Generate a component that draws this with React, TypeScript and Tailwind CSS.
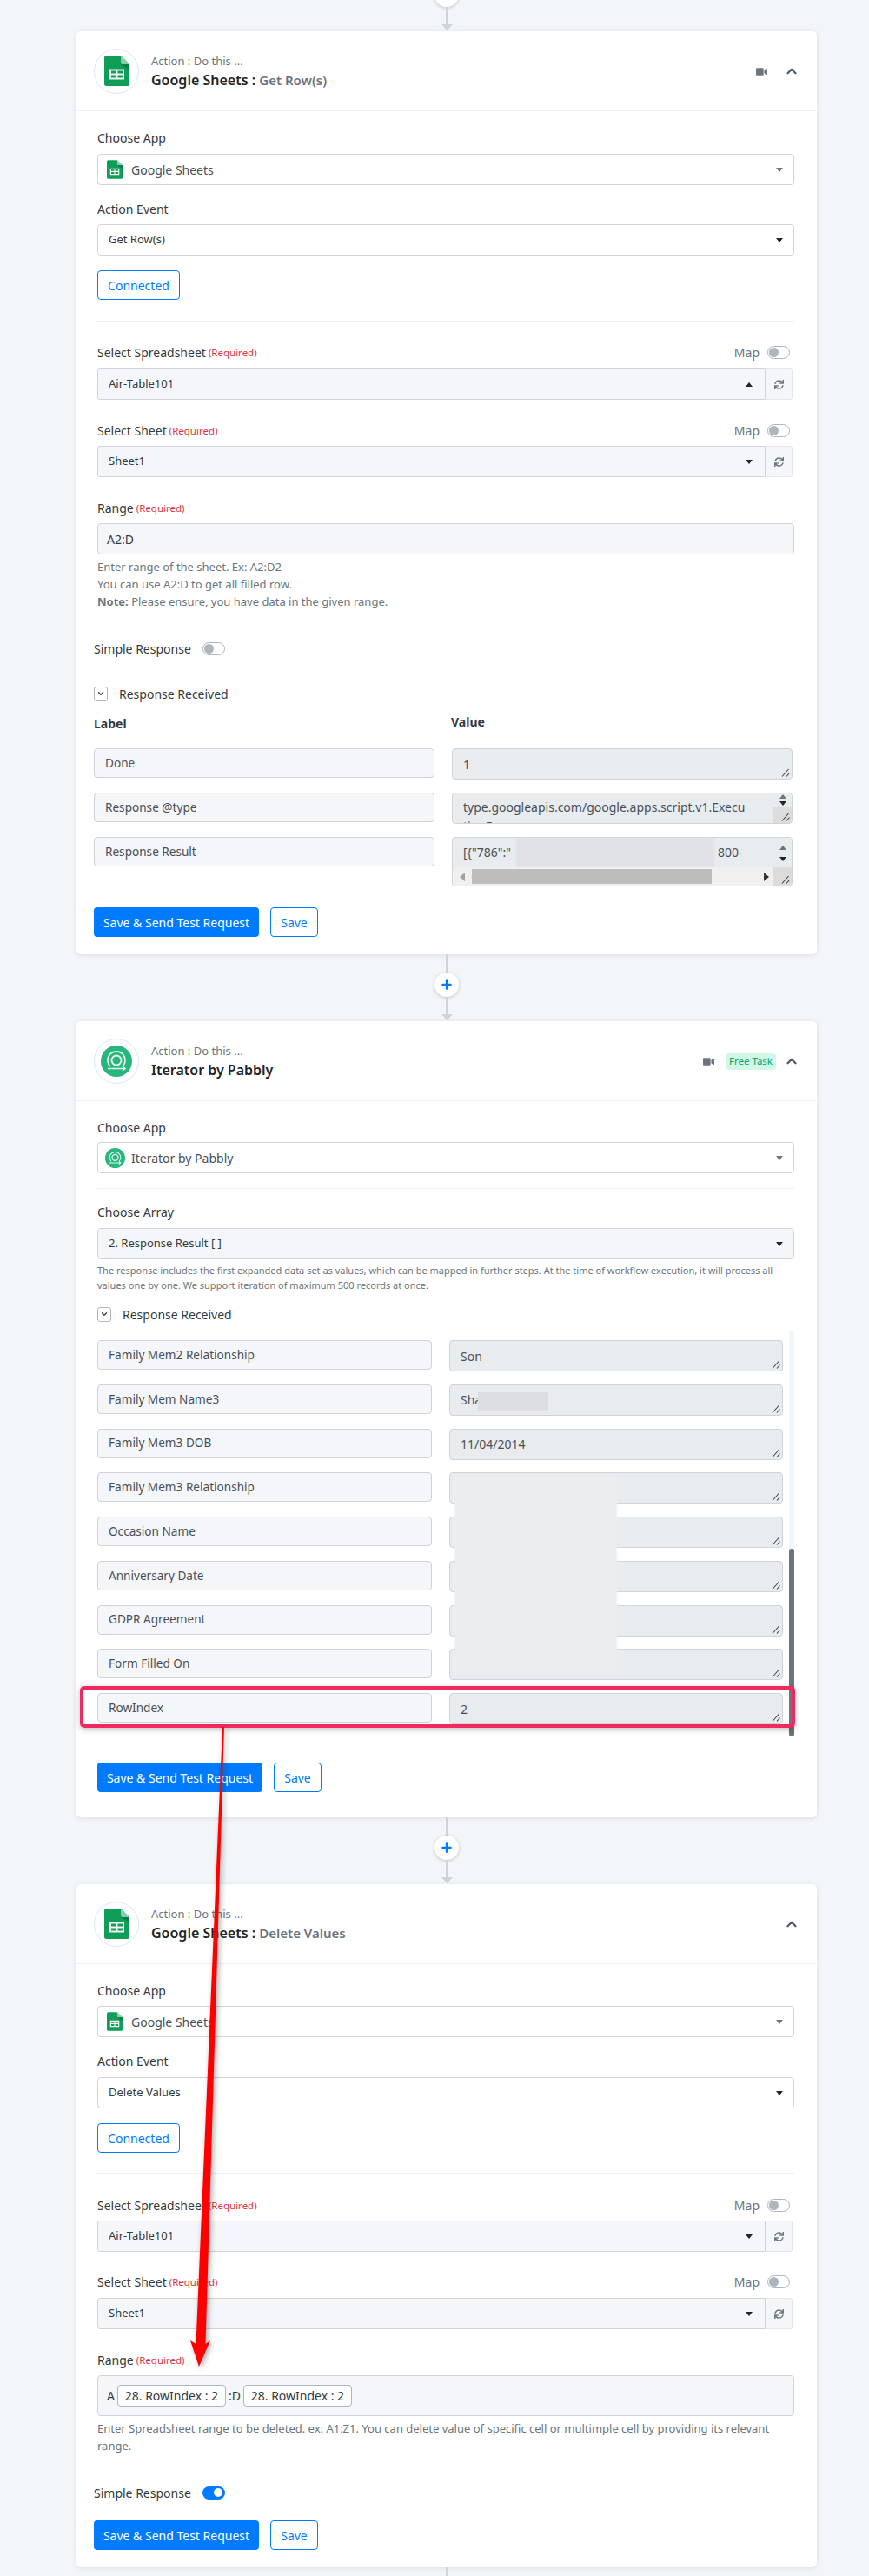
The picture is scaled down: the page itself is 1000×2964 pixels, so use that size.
import React from 'react';
import { ChevronDown, ChevronUp, Plus } from 'lucide-react';
import { FaSync, FaVideo } from 'react-icons/fa';

// small drawn pieces
const SheetsIcon = ({ className }: { className: string }) => (
  <svg viewBox="0 0 29 35" className={className}>
    <path d="M2.5 0H19L29 10V32.5A2.5 2.5 0 0 1 26.5 35H2.5A2.5 2.5 0 0 1 0 32.5V2.5A2.5 2.5 0 0 1 2.5 0Z" fill="#0f9d58" />
    <path d="M19 0L29 10H21A2 2 0 0 1 19 8Z" fill="#87ceac" />
    <path d="M19 10L29 16V10Z" fill="#0b7d46" />
    <path d="M6 15.5H23V27.5H6ZM8 17.5V20.5H13.5V17.5ZM15.5 17.5V20.5H21V17.5ZM8 22.5V25.5H13.5V22.5ZM15.5 22.5V25.5H21V22.5Z" fill="#f1f1f1" fillRule="evenodd" />
  </svg>
);

const IteratorIcon = ({ className }: { className: string }) => (
  <svg viewBox="0 0 36 36" className={className}>
    <circle cx="18" cy="18" r="18" fill="#27b67c" />
    <circle cx="18" cy="17" r="5.5" fill="none" stroke="#e8f7f0" strokeWidth="2" />
    <path d="M11 24A10 10 0 1 1 25 24" fill="none" stroke="#e8f7f0" strokeWidth="1.6" />
    <path d="M8 26.5H28M25 24L28 26.5L25 29" fill="none" stroke="#e8f7f0" strokeWidth="1.6" />
  </svg>
);

const Caret = ({ up, gray }: { up?: boolean; gray?: boolean }) => (
  <svg viewBox="0 0 8 5" className="h-[5px] w-2 shrink-0">
    <path d={up ? 'M0 5L4 0L8 5Z' : 'M0 0H8L4 5Z'} fill={gray ? '#6c757d' : '#1f2529'} />
  </svg>
);

const Grip = () => (
  <svg viewBox="0 0 10 10" className="absolute bottom-[2px] right-[2px] h-[10px] w-[10px]">
    <path d="M1 9.5L8.5 1M6 9.5L9.5 5.5" stroke="#444" strokeWidth="1.1" fill="none" />
  </svg>
);

const Label = ({ text, required, className = '' }: { text: string; required?: boolean; className?: string }) => (
  <div className={`flex h-5 items-center text-[14px] text-[#343a40] ${className}`}>
    {text}
    {required && <span className="ml-[3px] mt-[2px] text-[11.5px] text-[#dc3545]">(Required)</span>}
  </div>
);

const Toggle = ({ on }: { on?: boolean }) =>
  on ? (
    <span className="flex h-[15px] w-[26px] items-center justify-end rounded-full bg-[#007bff] pr-[3px]">
      <span className="h-[10px] w-[10px] rounded-full bg-white" />
    </span>
  ) : (
    <span className="flex h-[15px] w-[26px] items-center rounded-full border border-[#adb5bd] bg-white pl-[1px]">
      <span className="h-[11px] w-[11px] rounded-full bg-[#adb5bd]" />
    </span>
  );

const MapLabel = ({ text, className }: { text: string; className: string }) => (
  <div className={`flex h-5 items-center justify-between pr-[5px] ${className}`}>
    <Label text={text} required />
    <div className="flex items-center gap-[9px] text-[14px] text-[#6c757d]">
      Map
      <Toggle />
    </div>
  </div>
);

const AppSelect = ({ name, icon, className }: { name: string; icon: React.ReactNode; className: string }) => (
  <div className={`flex h-9 items-center rounded-[4px] border border-[#ced4da] bg-white pr-[12px] text-[14px] text-[#495057] ${className}`}>
    <span className="flex w-[38px] justify-center">{icon}</span>
    <span className="flex-1">{name}</span>
    <Caret gray />
  </div>
);

const PlainSelect = ({ value, gray, className }: { value: string; gray?: boolean; className: string }) => (
  <div className={`flex h-9 items-center rounded-[4px] border border-[#ced4da] pl-3 pr-[12px] text-[13px] text-[#343a40] ${gray ? 'bg-[#f4f6f9]' : 'bg-white'} ${className}`}>
    <span className="flex-1">{value}</span>
    <Caret />
  </div>
);

const SheetSelect = ({ value, up, className }: { value: string; up?: boolean; className: string }) => (
  <div className={`flex h-9 w-[800px] ${className}`}>
    <div className="flex w-[769px] items-center rounded-l-[3px] border border-[#ced4da] bg-[#f4f6f9] pl-3 pr-[14px] text-[13px] text-[#343a40]">
      <span className="flex-1">{value}</span>
      <Caret up={up} />
    </div>
    <div className="flex w-[31px] items-center justify-center rounded-r-[3px] border border-l-0 border-[#e3e7eb] bg-[#f4f6f9] text-[#6c757d]">
      <FaSync size={11} />
    </div>
  </div>
);

const Connected = ({ className }: { className: string }) => (
  <button className={`block h-[34px] w-[95px] rounded-[4px] border border-[#007bff] bg-white text-[14px] text-[#007bff] ${className}`}>Connected</button>
);

const Divider = ({ className }: { className: string }) => <div className={`h-px bg-[#eef2f8] ${className}`} />;

const SaveButtons = ({ className }: { className: string }) => (
  <div className={`flex gap-[13px] ${className}`}>
    <button className="h-[34px] w-[190px] rounded-[4px] bg-[#007bff] text-[14px] text-white">Save &amp; Send Test Request</button>
    <button className="h-[34px] w-[55px] rounded-[4px] border border-[#007bff] bg-white text-[14px] text-[#007bff]">Save</button>
  </div>
);

const SimpleResponse = ({ on, className }: { on?: boolean; className: string }) => (
  <div className={`-ml-1 flex h-5 items-center gap-[13px] text-[14px] text-[#343a40] ${className}`}>
    Simple Response
    <Toggle on={on} />
  </div>
);

const ResponseReceived = ({ className }: { className: string }) => (
  <div className={`flex h-5 items-center gap-[13px] text-[14px] text-[#343a40] ${className}`}>
    <span className="flex h-[17px] w-4 items-center justify-center rounded-[3px] border border-[#adb5bd] bg-white">
      <ChevronDown size={10} strokeWidth={3} color="#343a40" />
    </span>
    Response Received
  </div>
);

const Header = ({ icon, app, action, right }: { icon: React.ReactNode; app: string; action?: string; right: React.ReactNode }) => (
  <div className="flex h-[92px] items-center border-b border-[#eef2f8] pl-5 pr-5">
    <div className="flex h-[52px] w-[52px] items-center justify-center rounded-full border border-[#dbe6fb] bg-white">{icon}</div>
    <div className="ml-[14px] flex-1">
      <div className="text-[13px] leading-[20px] text-[#6c757d]">Action : Do this ...</div>
      <div className="mt-[1px] text-[16px] font-semibold leading-[22px] text-[#212529]">
        {app}
        {action && (
          <>
            {' : '}
            <span className="text-[15px] font-semibold text-[#6c757d]">{action}</span>
          </>
        )}
      </div>
    </div>
    <div className="mt-[1px] flex items-center">{right}</div>
  </div>
);

const Collapse = () => <ChevronUp size={18} strokeWidth={3} color="#4b5a6c" />;

const Connector = ({ top }: { top?: boolean }) => (
  <div className={`ml-[88px] flex h-[77px] w-[852px] flex-col items-center ${top ? '-mt-[41px]' : ''}`}>
    <div className="h-[21px] w-[2px] bg-[#ced4da]" />
    <div className="flex h-7 w-7 items-center justify-center rounded-full bg-white text-[#007bff] shadow-[0_1px_4px_rgba(0,0,0,0.2)]">
      <Plus size={16} strokeWidth={3.5} />
    </div>
    <div className="h-[20px] w-[2px] bg-[#ced4da]" />
    <svg viewBox="0 0 13 7" className="h-[7px] w-[13px]">
      <path d="M0 0H13L6.5 7Z" fill="#ced4da" />
    </svg>
  </div>
);

const responseRows = [
  ['Family Mem2 Relationship', 'Son'],
  ['Family Mem Name3', 'Sha'],
  ['Family Mem3 DOB', '11/04/2014'],
  ['Family Mem3 Relationship', ''],
  ['Occasion Name', ''],
  ['Anniversary Date', ''],
  ['GDPR Agreement', ''],
  ['Form Filled On', ''],
  ['RowIndex', '2'],
];

const LabelBox = ({ text }: { text: string }) => (
  <div className="flex h-[34px] items-center rounded-[4px] border border-[#ced4da] bg-[#f4f6f9] pl-3 text-[13.6px] text-[#495057]">{text}</div>
);

const ValueBox = ({ text }: { text: string }) => (
  <div className="relative flex h-9 items-center rounded-[4px] border border-[#ced4da] bg-[#e9ecef] pl-3 text-[14px] text-[#495057]">
    {text}
    <Grip />
  </div>
);

const ChipValue = () => (
  <span className="flex h-[25px] w-[125px] items-center justify-center rounded-[4px] border border-[#adb5bd] bg-white text-[14px] text-[#343a40]">28. RowIndex : 2</span>
);

export default function App() {
  return (
    <div className="relative h-[2964px] overflow-hidden bg-[#f3f6f9] font-['Noto_Sans',sans-serif]">
      <Connector top />

      {/* Google Sheets : Get Row(s) */}
      <div className="ml-[88px] w-[852px] rounded-[5px] bg-white shadow-[0_1px_6px_rgba(60,80,110,0.14)]">
        <Header
          icon={<SheetsIcon className="h-[35px] w-[29px]" />}
          app="Google Sheets"
          action="Get Row(s)"
          right={
            <>
              <FaVideo size={13} color="#6c757d" className="mr-[19px]" />
              <Collapse />
            </>
          }
        />
        <div className="pb-5 pl-6 pr-[26px]">
          <Label text="Choose App" className="mt-5" />
          <AppSelect name="Google Sheets" icon={<SheetsIcon className="h-[22px] w-[18px]" />} className="mt-[9px]" />
          <Label text="Action Event" className="mt-[17px]" />
          <PlainSelect value="Get Row(s)" className="mt-2" />
          <Connected className="mt-[17px]" />
          <Divider className="mt-6" />
          <MapLabel text="Select Spreadsheet" className="mt-[25px]" />
          <SheetSelect value="Air-Table101" up className="mt-[9px]" />
          <MapLabel text="Select Sheet" className="mt-[25px]" />
          <SheetSelect value="Sheet1" className="mt-2" />
          <Label text="Range" required className="mt-[25px]" />
          <div className="mt-2 flex h-9 items-center rounded-[4px] border border-[#ced4da] bg-[#f4f6f9] pl-2.5 text-[14px] text-[#343a40]">A2:D</div>
          <div className="mt-1 text-[13px] leading-5 text-[#6c757d]">
            <div>Enter range of the sheet. Ex: A2:D2</div>
            <div>You can use A2:D to get all filled row.</div>
            <div>
              <span className="font-bold">Note:</span> Please ensure, you have data in the given range.
            </div>
          </div>
          <SimpleResponse className="mt-[34px]" />
          <div className="-ml-1">
            <ResponseReceived className="mt-8" />
            <div className="mt-[15px] grid w-[804px] grid-cols-2 gap-x-5 text-[14px] font-bold text-[#343a40]">
              <div className="leading-5">Label</div>
              <div className="-ml-px -mt-[2px] leading-5">Value</div>
            </div>
            <div className="mt-[18px] grid w-[804px] grid-cols-2 gap-x-5 gap-y-[15px]">
              <LabelBox text="Done" />
              <ValueBox text="1" />
              <LabelBox text="Response @type" />
              <div className="relative h-9 overflow-hidden rounded-[4px] border border-[#ced4da] bg-[#e9ecef]">
                <div className="w-[369px] pl-3 pt-[5px] text-[14px] leading-[22px] text-[#495057]">
                  type.googleapis.com/google.apps.script.v1.Execu tionError
                </div>
                <div className="absolute bottom-0 right-0 top-0 flex w-[21px] flex-col items-center bg-[#e9ecef]">
                  <div className="flex h-[15px] flex-col items-center justify-center gap-[1px]">
                    <Caret up gray />
                    <span className="h-px w-[13px] bg-[#adb5bd]" />
                    <Caret />
                  </div>
                  <div className="w-full flex-1 bg-[#dcdcdc]" />
                </div>
                <Grip />
              </div>
              <LabelBox text="Response Result" />
              <div className="relative h-[57px] overflow-hidden rounded-[4px] border border-[#ced4da] bg-[#e9ecef]">
                <div className="relative h-[35px] pl-3 pt-[6px] text-[14px] leading-[22px] text-[#495057]">
                  <span>[{'{'}"786":"</span>
                  <span className="absolute left-[305px] top-[6px]">800-</span>
                  <div className="absolute left-[73px] top-0 h-[34px] w-[228px] bg-[#dfe1e4] blur-[1px]" />
                </div>
                <div className="absolute bottom-0 left-0 right-0 flex h-[21px] items-center bg-[#f0f0f0]">
                  <svg viewBox="0 0 6 10" className="ml-2 h-[10px] w-[6px]">
                    <path d="M6 0V10L0 5Z" fill="#a3a3a3" />
                  </svg>
                  <div className="ml-2 h-[17px] w-[276px] bg-[#bdbdbd]" />
                  <svg viewBox="0 0 6 10" className="ml-[60px] h-[10px] w-[6px]">
                    <path d="M0 0V10L6 5Z" fill="#333" />
                  </svg>
                </div>
                <div className="absolute right-0 top-0 flex h-[35px] w-[21px] flex-col items-center justify-center gap-2 bg-[#e9ecef]">
                  <Caret up gray />
                  <Caret />
                </div>
                <div className="absolute bottom-0 right-0 h-[21px] w-[21px] bg-[#dcdcdc]" />
                <Grip />
              </div>
            </div>
            <SaveButtons className="mt-[24px]" />
          </div>
        </div>
      </div>

      <Connector />

      {/* Iterator by Pabbly */}
      <div className="ml-[88px] w-[852px] rounded-[5px] bg-white shadow-[0_1px_6px_rgba(60,80,110,0.14)]">
        <Header
          icon={<IteratorIcon className="h-9 w-9" />}
          app="Iterator by Pabbly"
          right={
            <>
              <FaVideo size={13} color="#6c757d" className="mr-[13px]" />
              <span className="mr-[9px] flex h-[19px] w-[58px] items-center justify-center rounded-[4px] bg-[#d1f7e6] text-[11.5px] text-[#0ba56c]">Free Task</span>
              <Collapse />
            </>
          }
        />
        <div className="pb-[29px] pl-6 pr-[26px]">
          <Label text="Choose App" className="mt-[20px]" />
          <AppSelect name="Iterator by Pabbly" icon={<IteratorIcon className="h-[23px] w-[23px]" />} className="mt-[7px]" />
          <Divider className="mt-[17px]" />
          <Label text="Choose Array" className="mt-4" />
          <PlainSelect value="2. Response Result [ ]" gray className="mt-[9px]" />
          <div className="mt-1 text-[11px] leading-[17px] text-[#6c757d]">
            The response includes the first expanded data set as values, which can be mapped in further steps. At the time of workflow execution, it will process all values one by one. We support iteration of maximum 500 records at once.
          </div>
          <ResponseReceived className="mt-[15px]" />
          <div className="relative mt-[9px] h-[467px] w-[803px] pt-[11px]">
            <div className="absolute bottom-0 right-[1px] top-0 w-[6px] bg-[#f1f6fd]" />
            <div className="absolute bottom-0 right-[1px] h-[216px] w-[6px] rounded-full bg-[#6c757d]" />
            <div className="grid w-[789px] grid-cols-[385px_384px] gap-x-5 gap-y-[14.75px]">
              {responseRows.map(([label, value]) => (
                <React.Fragment key={label}>
                  <LabelBox text={label} />
                  <ValueBox text={value} />
                </React.Fragment>
              ))}
            </div>
            {/* redacted values */}
            <div className="absolute left-[438px] top-[71px] h-[21px] w-[81px] bg-[#dcdee1]" />
            <div className="absolute left-[411px] top-[166px] h-[227px] w-[187px] bg-[#ebedef] blur-[1px]" />
            {/* highlight around the last row */}
            <div className="absolute -left-5 top-[409px] h-[48px] w-[823px] rounded-[5px] border-4 border-[#f0295f] shadow-[0_2px_6px_rgba(0,0,0,0.25)]" />
          </div>
          <SaveButtons className="mt-[30px]" />
        </div>
      </div>

      <Connector />

      {/* Google Sheets : Delete Values */}
      <div className="ml-[88px] w-[852px] rounded-[5px] bg-white shadow-[0_1px_6px_rgba(60,80,110,0.14)]">
        <Header icon={<SheetsIcon className="h-[35px] w-[29px]" />} app="Google Sheets" action="Delete Values" right={<Collapse />} />
        <div className="pb-5 pl-6 pr-[26px]">
          <Label text="Choose App" className="mt-5" />
          <AppSelect name="Google Sheets" icon={<SheetsIcon className="h-[22px] w-[18px]" />} className="mt-2" />
          <Label text="Action Event" className="mt-[17px]" />
          <PlainSelect value="Delete Values" className="mt-[9px]" />
          <Connected className="mt-[17px]" />
          <Divider className="mt-[23px]" />
          <MapLabel text="Select Spreadsheet" className="mt-[26px]" />
          <SheetSelect value="Air-Table101" className="mt-2" />
          <MapLabel text="Select Sheet" className="mt-6" />
          <SheetSelect value="Sheet1" className="mt-[9px]" />
          <Label text="Range" required className="mt-[25px]" />
          <div className="mt-2 flex h-[47px] items-center gap-[3px] rounded-[4px] border border-[#ced4da] bg-[#f4f6f9] pl-2.5 text-[14px] text-[#343a40]">
            A
            <ChipValue />
            :D
            <ChipValue />
          </div>
          <div className="mt-1 text-[13px] leading-5 text-[#6c757d]">
            Enter Spreadsheet range to be deleted. ex: A1:Z1. You can delete value of specific cell or multimple cell by providing its relevant range.
          </div>
          <SimpleResponse on className="mt-[34px]" />
          <div className="-ml-1">
            <SaveButtons className="mt-[22px]" />
          </div>
        </div>
      </div>

      <div className="ml-[513px] h-[10px] w-[2px] bg-[#ced4da]" />

      {/* red annotation arrow drawn over the page */}
      <svg viewBox="0 0 1000 2964" className="pointer-events-none absolute left-0 top-0 h-[2964px] w-[1000px] drop-shadow-[2px_2px_3px_rgba(0,0,0,0.35)]">
        <path d="M256 1987H258L236.5 2697L242 2693L229 2723L219 2693L225.5 2697Z" fill="#ff0000" />
      </svg>
    </div>
  );
}
